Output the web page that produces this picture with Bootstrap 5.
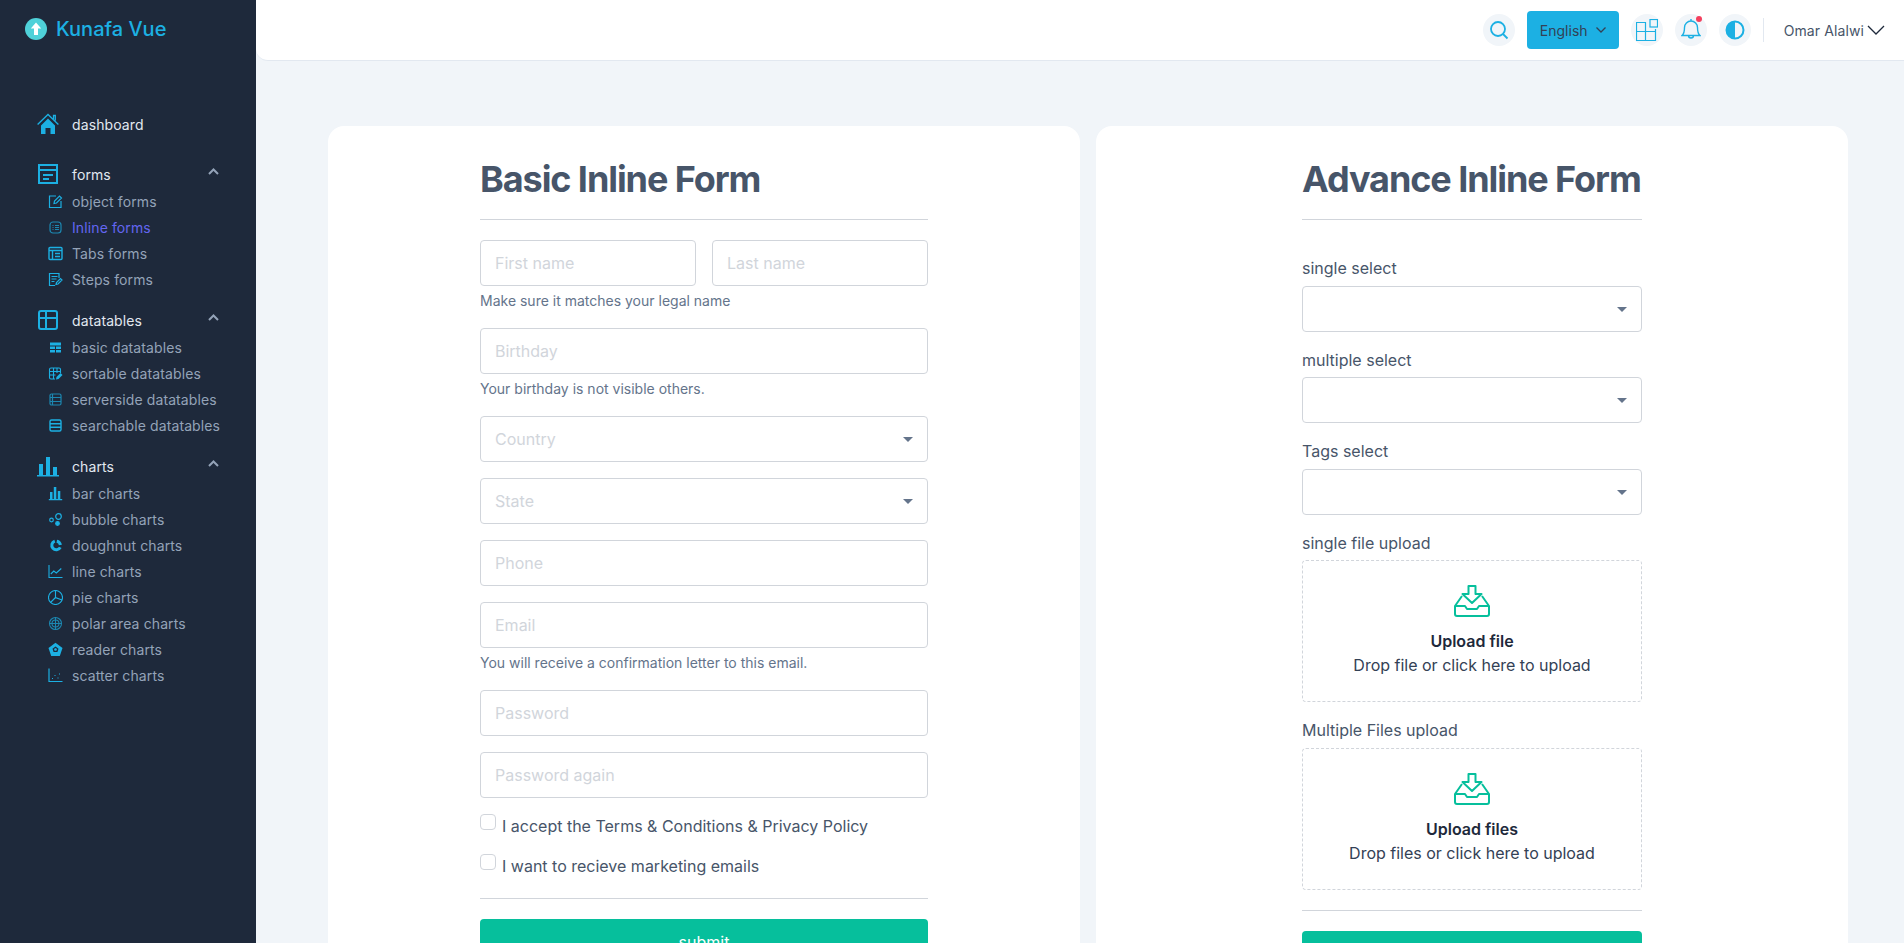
<!DOCTYPE html>
<html lang="en">
<head>
    <meta charset="UTF-8">
    <meta name="viewport" content="width=device-width, initial-scale=1.0">
    <title>Kunafa Vue</title>
    <link href="https://cdn.jsdelivr.net/npm/bootstrap@5.3.0/dist/css/bootstrap.min.css" rel="stylesheet">
    <style>
        html, body { height: 100%; overflow: hidden; }
        body { background-color: #f1f5f9; font-family: Inter, "Liberation Sans", sans-serif; color: #475569; }
        .side { width: 256px; flex: 0 0 256px; height: 100vh; background-color: #1e293b; }
        .brand { height: 61px; padding: 18px 0 0 25px; gap: 9px; color: #1cb0e3; font-size: 20px; font-weight: 500; line-height: 22px; }
        .side-nav { padding: 49px 0 0 37px; font-size: 14px; letter-spacing: .11px; }
        .nav-head { height: 28px; color: #e2e8f0; width: 182px; }
        .nav-head > svg:first-child { width: 22px; height: 22px; margin-right: 13px; flex: none; }
        .nav-head .chev { margin-left: auto; width: 11px; height: 7px; margin-top: -6px; }
        .nav-group { margin-top: 14px; }
        .nav-group.first { margin-top: 22px; }
        .nav-sub { height: 26px; padding-left: 11px; color: #94a3b8; }
        .nav-sub svg { width: 15px; height: 15px; margin-right: 9px; flex: none; color: #1cb0e3; }
        .nav-sub.on { color: #6366f1; }
        .nav-sub.dim svg { opacity: .7; }
        .topbar { height: 61px; background-color: #fff; border-bottom: 1px solid #e2e8f0; border-bottom-left-radius: 12px; padding-right: 19px; gap: 12px; }
        .round-ico { width: 32px; height: 32px; border-radius: 50%; background-color: #f1f5f9; }
        .lang-btn { width: 92px; height: 38px; background-color: #1cb0e3; color: #334155; border: 0; border-radius: 4px; font-size: 14px; padding: 0; gap: 8px; }
        .red-dot { position: absolute; top: 2px; right: 5px; width: 6px; height: 6px; border-radius: 50%; background-color: #f43f5e; }
        .vline { width: 1px; height: 24px; background-color: #e2e8f0; }
        .user-name { font-size: 14px; color: #475569; margin-left: 8px; gap: 3px; letter-spacing: .1px; }
        .content { padding: 65px 56px 0 72px; gap: 16px; }
        .form-card { flex: 1 1 0; background-color: #fff; border-radius: 16px; padding-top: 33px; min-height: 900px; }
        .form-left { width: 448px; }
        .form-right { width: 340px; }
        .form-title { font-size: 36px; line-height: 40px; font-weight: 700; color: #475569; margin: 0; letter-spacing: -1.08px; white-space: nowrap; }
        .rule { margin: 20px 0; border: 0; border-top: 1px solid #d1d5db; opacity: 1; }
        .rule.wide-gap { margin-bottom: 36px; }
        .form-control, .form-select { height: 46px; border: 1px solid #d1d5db; border-radius: 4px; padding: 0 14px; font-size: 16px; color: #475569; }
        .form-control::placeholder { color: #d1d5db; }
        .form-select { color: #d1d5db; background-image: none; position: relative; }
        .select-box { position: relative; }
        .select-box::after { content: ""; position: absolute; right: 15px; top: 21px; border-left: 5px solid transparent; border-right: 5px solid transparent; border-top: 5px solid #64748b; }
        .hint { font-size: 14px; line-height: 20px; margin: 5px 0 17px; color: #64748b; }
        .field { margin-bottom: 16px; }
        .field-label { line-height: 24px; margin-bottom: 5.5px; display: block; }
        .check-row { line-height: 24px; margin-bottom: 16px; }
        .form-check-input { width: 16px; height: 16px; margin: 0 6px 0 0; border-color: #d1d5db; border-radius: 4px; }
        .drop-zone { height: 142px; border: 1px dashed #d1d5db; border-radius: 4px; padding-top: 24px; color: #334155; line-height: 24px; }
        .drop-zone svg { width: 36px; height: 32px; margin-bottom: 12px; color: #06bf9c; display: block; }
        .drop-zone strong { color: #1e293b; font-weight: 600; }
        .send-btn { height: 46px; width: 100%; background-color: #06bf9c; color: #fff; border: 0; border-radius: 4px; font-size: 16px; }
    </style>
</head>
<body>
<div class="d-flex">
    <!-- sidebar -->
    <aside class="side">
        <div class="brand d-flex">
            <svg width="22" height="22" viewBox="0 0 22 22"><circle cx="11" cy="11" r="11" fill="#4fd1d9"/><path d="M11 4.500 5.800 10.500H9V17h4v-6.500h3.200z" fill="#fff"/></svg>
            <span>Kunafa Vue</span>
        </div>
        <nav class="side-nav">
            <div class="nav-head d-flex align-items-center">
                <svg viewBox="0 0 22 22" fill="#1cb0e3"><path d="M4 12.500 11 5.500l7 7V21h-4.500v-6h-5v6H4z"/><path d="M.6 11.500 11 1.500l10.400 10M16.500 6V2.500h1.800v5" fill="none" stroke="#1cb0e3" stroke-width="1.300"/></svg>
                <span>dashboard</span>
            </div>

            <div class="nav-group first">
                <div class="nav-head d-flex align-items-center">
                    <svg viewBox="0 0 22 22" fill="none" stroke="#1cb0e3" stroke-width="2"><rect x="2" y="2" width="18" height="18"/><path d="M2 7h18M6 12h10M6 16h6"/></svg>
                    <span>forms</span>
                    <svg class="chev" viewBox="0 0 11 7" fill="none" stroke="#94a3b8" stroke-width="2"><path d="M1 6l4.500-4.500L10 6"/></svg>
                </div>
                <div class="nav-sub d-flex align-items-center">
                    <svg viewBox="0 0 15 15" fill="none" stroke="currentColor" stroke-width="1.200"><path d="M8 2H1.500v11.500H13V7M6 9.500l.5-2.500 5-5 2 2-5 5z"/></svg>
                    <span>object forms</span>
                </div>
                <div class="nav-sub dim on d-flex align-items-center">
                    <svg viewBox="0 0 15 15" fill="none" stroke="#1cb0e3" stroke-width="1.200"><rect x="2" y="2" width="11" height="11" rx="3"/><path d="M4.500 5.500h1M7 5.500h4M4.500 7.500h1M7 7.500h4M4.500 9.500h1M7 9.500h4"/></svg>
                    <span>Inline forms</span>
                </div>
                <div class="nav-sub d-flex align-items-center">
                    <svg viewBox="0 0 15 15" fill="none" stroke="currentColor" stroke-width="1.400"><rect x="1" y="1.500" width="13" height="12" rx="1"/><path d="M1 4.500h13M4.500 4.500v9M7 7.500h5M7 10.500h5"/></svg>
                    <span>Tabs forms</span>
                </div>
                <div class="nav-sub d-flex align-items-center">
                    <svg viewBox="0 0 15 15" fill="none" stroke="currentColor" stroke-width="1.200"><path d="M11 6V1.500H1.500v12H7M3.500 4.500h6M3.500 7h5M3.500 9.500h3M8 12.500l.5-2 4-4 1.500 1.500-4 4z"/></svg>
                    <span>Steps forms</span>
                </div>
            </div>

            <div class="nav-group">
                <div class="nav-head d-flex align-items-center">
                    <svg viewBox="0 0 22 22" fill="none" stroke="#1cb0e3" stroke-width="2"><rect x="2" y="2" width="18" height="18" rx="2"/><path d="M2 9h18M9 2v18"/></svg>
                    <span>datatables</span>
                    <svg class="chev" viewBox="0 0 11 7" fill="none" stroke="#94a3b8" stroke-width="2"><path d="M1 6l4.500-4.500L10 6"/></svg>
                </div>
                <div class="nav-sub d-flex align-items-center">
                    <svg viewBox="0 0 15 15" fill="currentColor"><path d="M2 2.500h11V5.500H2zM2 6.500h5v2.500H2zM8 6.500h5v2.500H8zM2 10h5v2.500H2zM8 10h5v2.500H8z"/></svg>
                    <span>basic datatables</span>
                </div>
                <div class="nav-sub d-flex align-items-center">
                    <svg viewBox="0 0 15 15" fill="none" stroke="currentColor" stroke-width="1.100"><path d="M7 13H3a1.500 1.500 0 0 1-1.500-1.500v-8A1.500 1.500 0 0 1 3 2h8a1.500 1.500 0 0 1 1.500 1.500V7M1.500 5.500h11M5.500 2v11M1.500 9h6M9 2v5"/><path d="M8 13.500l.5-2.500 4-4 2 2-4 4z" fill="currentColor" stroke="none"/></svg>
                    <span>sortable datatables</span>
                </div>
                <div class="nav-sub dim d-flex align-items-center">
                    <svg viewBox="0 0 15 15" fill="none" stroke="currentColor" stroke-width="1.200"><rect x="2" y="2" width="11" height="11" rx="1.500"/><path d="M2 5.500h11M2 9.500h11M4.500 2v11"/></svg>
                    <span>serverside datatables</span>
                </div>
                <div class="nav-sub d-flex align-items-center">
                    <svg viewBox="0 0 15 15" fill="none" stroke="currentColor" stroke-width="1.400"><rect x="2" y="2" width="11" height="11" rx="1.500"/><path d="M2 5.700h11M2 9.300h11"/></svg>
                    <span>searchable datatables</span>
                </div>
            </div>

            <div class="nav-group">
                <div class="nav-head d-flex align-items-center">
                    <svg viewBox="0 0 22 22" fill="#1cb0e3"><path d="M2 9h4v11H2zM9 2h4v18H9zM16 12h4v8h-4zM0 20h22v1.500H0z"/></svg>
                    <span>charts</span>
                    <svg class="chev" viewBox="0 0 11 7" fill="none" stroke="#94a3b8" stroke-width="2"><path d="M1 6l4.500-4.500L10 6"/></svg>
                </div>
                <div class="nav-sub d-flex align-items-center">
                    <svg viewBox="0 0 15 15" fill="currentColor"><path d="M2 6h2.500v7H2zM5.800 1h2.500v12H5.800zM9.800 5h2.500v8H9.800zM.8 13h13.400v1.200H.8z"/></svg>
                    <span>bar charts</span>
                </div>
                <div class="nav-sub d-flex align-items-center">
                    <svg viewBox="0 0 15 15" fill="none" stroke="currentColor" stroke-width="1.200"><circle cx="3.500" cy="8" r="1.800"/><circle cx="10.500" cy="4.500" r="2.800"/><circle cx="9.500" cy="11.500" r="1.800" fill="currentColor"/></svg>
                    <span>bubble charts</span>
                </div>
                <div class="nav-sub d-flex align-items-center">
                    <svg viewBox="0 0 15 15" fill="none" stroke="currentColor" stroke-width="3"><path d="M6.800 3.100a4.500 4.500 0 1 0 5.500 6.300"/><path d="M8.800 3.200A4.500 4.500 0 0 1 12.400 7"/></svg>
                    <span>doughnut charts</span>
                </div>
                <div class="nav-sub d-flex align-items-center">
                    <svg viewBox="0 0 15 15" fill="none" stroke="currentColor" stroke-width="1.100"><path d="M1 1v12.500h13.500M2.800 10l3-3 2.500 2 5-4.500"/></svg>
                    <span>line charts</span>
                </div>
                <div class="nav-sub d-flex align-items-center">
                    <svg viewBox="0 0 15 15" fill="none" stroke="currentColor" stroke-width="1.100"><circle cx="7.500" cy="7.500" r="7"/><path d="M7.500.5v7l6.500 2.500M7.500 7.500 2.500 12.500"/></svg>
                    <span>pie charts</span>
                </div>
                <div class="nav-sub dim d-flex align-items-center">
                    <svg viewBox="0 0 15 15" fill="none" stroke="currentColor" stroke-width="1.100"><circle cx="7.500" cy="7.500" r="6"/><circle cx="7.500" cy="7.500" r="3.500"/><path d="M7.500 1v13M1 7.500h13"/></svg>
                    <span>polar area charts</span>
                </div>
                <div class="nav-sub d-flex align-items-center">
                    <svg viewBox="0 0 15 15" fill="currentColor"><path d="M7.500 .7 14.500 6l-2.700 8H3.200L.5 6z"/><path d="M7.500 4.500l3 2.200-1.100 3.300H5.600L4.500 6.700z" fill="#1e293b"/><path d="M7.500 6l1.500 1.100-.6 1.700H6.600L6 7.100z"/></svg>
                    <span>reader charts</span>
                </div>
                <div class="nav-sub d-flex align-items-center">
                    <svg viewBox="0 0 15 15" fill="none" stroke="currentColor" stroke-width="1.200"><path d="M1 .5v13h13.500"/><path d="M4 10.500h1M6.500 7.500h1M9.500 10h1M11 6h1"/></svg>
                    <span>scatter charts</span>
                </div>
            </div>
        </nav>
    </aside>

    <div class="flex-grow-1">
        <!-- top bar -->
        <header class="topbar d-flex align-items-center justify-content-end">
            <div class="round-ico d-flex align-items-center justify-content-center">
                <svg width="20" height="20" viewBox="0 0 20 20" fill="none" stroke="#1cb0e3" stroke-width="1.800"><circle cx="9" cy="9" r="7"/><path d="M14 14l4.500 4.500"/></svg>
            </div>
            <button class="lang-btn d-flex align-items-center justify-content-center" type="button">
                <span>English</span>
                <svg width="10" height="6" viewBox="0 0 10 6" fill="none" stroke="#334155" stroke-width="1.300"><path d="M.5.500 5 5 9.500.5"/></svg>
            </button>
            <div class="round-ico d-flex align-items-center justify-content-center">
                <svg width="22" height="22" viewBox="0 0 22 22" fill="none" stroke="#1cb0e3" stroke-width="1.200"><path d="M.5 3.500h9v18h-9zM.5 12.500h19v9h-10M19.500 10v2.500M9.500 3.500"/><rect x="14" y=".5" width="7.500" height="7.500"/></svg>
            </div>
            <div class="round-ico position-relative d-flex align-items-center justify-content-center">
                <svg width="20" height="24" viewBox="0 0 20 24" fill="none" stroke="#1cb0e3" stroke-width="1.400"><path d="M10 3a6.500 6.500 0 0 0-6.500 6.500c0 6-2.500 8-2.500 8h18s-2.500-2-2.500-8A6.500 6.500 0 0 0 10 3zM10 1v2M7.500 17.500a2.500 2.500 0 0 0 5 0"/></svg>
                <span class="red-dot"></span>
            </div>
            <div class="round-ico d-flex align-items-center justify-content-center">
                <svg width="20" height="20" viewBox="0 0 20 20"><circle cx="10" cy="10" r="8.500" fill="none" stroke="#1cb0e3" stroke-width="2"/><path d="M10 1.500a8.500 8.500 0 0 0 0 17z" fill="#1cb0e3"/></svg>
            </div>
            <div class="vline"></div>
            <div class="user-name d-flex align-items-center">
                <span>Omar Alalwi</span>
                <svg width="18" height="10" viewBox="0 0 18 10" fill="none" stroke="#1e293b" stroke-width="1.300"><path d="M1 1l8 8 8-8"/></svg>
            </div>
        </header>

        <main class="content d-flex">
            <!-- basic form -->
            <section class="form-card d-flex justify-content-center">
                <form class="form-left">
                    <h2 class="form-title">Basic Inline Form</h2>
                    <hr class="rule">
                    <div class="d-flex gap-3">
                        <input class="form-control" type="text" placeholder="First name">
                        <input class="form-control" type="text" placeholder="Last name">
                    </div>
                    <p class="hint">Make sure it matches your legal name</p>
                    <input class="form-control" type="text" placeholder="Birthday">
                    <p class="hint">Your birthday is not visible others.</p>
                    <div class="select-box field"><div class="form-select d-flex align-items-center">Country</div></div>
                    <div class="select-box field"><div class="form-select d-flex align-items-center">State</div></div>
                    <div class="field"><input class="form-control" type="text" placeholder="Phone"></div>
                    <input class="form-control" type="email" placeholder="Email">
                    <p class="hint">You will receive a confirmation letter to this email.</p>
                    <div class="field"><input class="form-control" type="password" placeholder="Password"></div>
                    <div class="field"><input class="form-control" type="password" placeholder="Password again"></div>
                    <label class="check-row d-flex"><input class="form-check-input" type="checkbox"><span>I accept the Terms &amp; Conditions &amp; Privacy Policy</span></label>
                    <label class="check-row d-flex mb-0"><input class="form-check-input" type="checkbox"><span>I want to recieve marketing emails</span></label>
                    <hr class="rule">
                    <button class="send-btn" type="button">submit</button>
                </form>
            </section>

            <!-- advance form -->
            <section class="form-card d-flex justify-content-center">
                <form class="form-right">
                    <h2 class="form-title">Advance Inline Form</h2>
                    <hr class="rule wide-gap">
                    <div class="field">
                        <span class="field-label">single select</span>
                        <div class="select-box"><div class="form-select"></div></div>
                    </div>
                    <div class="field">
                        <span class="field-label">multiple select</span>
                        <div class="select-box"><div class="form-select"></div></div>
                    </div>
                    <div class="field">
                        <span class="field-label">Tags select</span>
                        <div class="select-box"><div class="form-select"></div></div>
                    </div>
                    <div class="field">
                        <span class="field-label">single file upload</span>
                        <div class="drop-zone d-flex flex-column align-items-center">
                            <svg viewBox="0 0 36 32" fill="none" stroke="currentColor" stroke-width="2" stroke-linejoin="round"><path d="M14.500 1h7v8h6L18 18 8.500 9h6zM8 11 1 21v8a2 2 0 0 0 2 2h30a2 2 0 0 0 2-2v-8L28 11M1 21h10l2 3h10l2-3h10"/></svg>
                            <strong>Upload file</strong>
                            <span>Drop file or click here to upload</span>
                        </div>
                    </div>
                    <span class="field-label">Multiple Files upload</span>
                    <div class="drop-zone d-flex flex-column align-items-center">
                        <svg viewBox="0 0 36 32" fill="none" stroke="currentColor" stroke-width="2" stroke-linejoin="round"><path d="M14.500 1h7v8h6L18 18 8.500 9h6zM8 11 1 21v8a2 2 0 0 0 2 2h30a2 2 0 0 0 2-2v-8L28 11M1 21h10l2 3h10l2-3h10"/></svg>
                        <strong>Upload files</strong>
                        <span>Drop files or click here to upload</span>
                    </div>
                    <hr class="rule">
                    <button class="send-btn" type="button">submit</button>
                </form>
            </section>
        </main>
    </div>
</div>
<script src="https://cdn.jsdelivr.net/npm/bootstrap@5.3.0/dist/js/bootstrap.bundle.min.js"></script>
</body>
</html>
